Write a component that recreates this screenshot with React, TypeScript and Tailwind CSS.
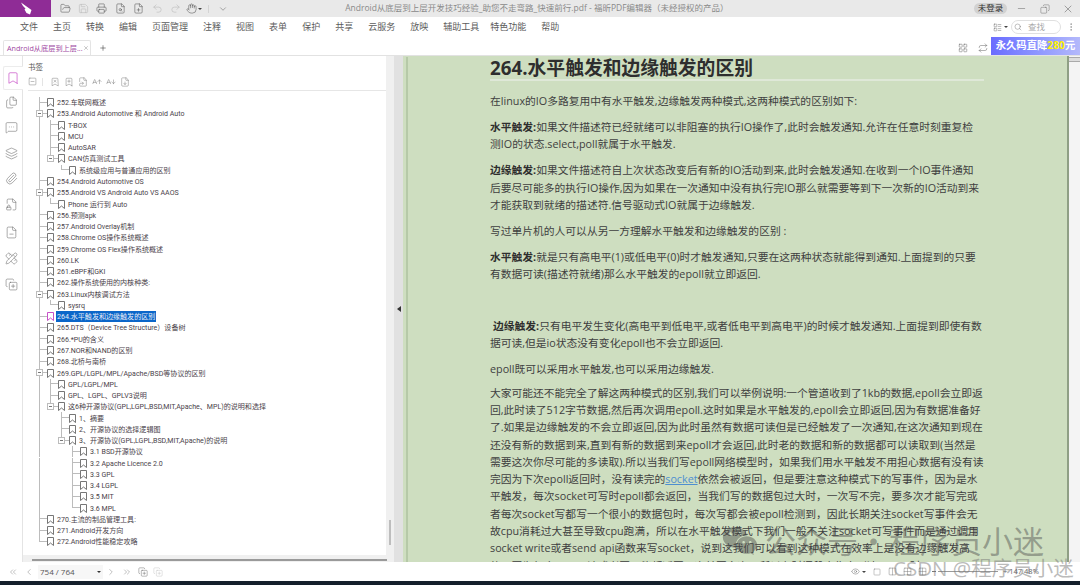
import * as React from 'react';
import {
  FolderOpen,
  Save,
  Printer,
  FileSearch,
  FilePlus,
  Undo2,
  Redo2,
  Hand,
  ChevronDown,
  Minus,
  Copy,
  X,
  Search,
  MoreVertical,
  LayoutGrid,
  Repeat,
  Files,
  MessageSquareMore,
  Layers,
  Paperclip,
  FileLock2,
  FileMinus,
  PencilRuler,
  CopyPlus,
  SquareMinus,
  BookmarkX,
  BookmarkPlus,
  FileSymlink,
  AArrowUp,
  AArrowDown,
  FileDown,
  ChevronsLeft,
  ChevronLeft,
  ChevronRight,
  ChevronsRight,
  Eye,
  Square,
  Columns2,
  Grid2x2,
  LayoutList,
  Bookmark,
  Plus,
} from 'lucide-react';
import { FaWeixin } from 'react-icons/fa';

type TreeRow = { label: string; level: number };

const treeRows: TreeRow[] = [
  { label: '252.车联网概述', level: 0 },
  { label: '253.Android Automotive 和 Android Auto', level: 0 },
  { label: 'T-BOX', level: 1 },
  { label: 'MCU', level: 1 },
  { label: 'AutoSAR', level: 1 },
  { label: 'CAN仿真测试工具', level: 1 },
  { label: '系统级应用与普通应用的区别', level: 2 },
  { label: '254.Android Automotive OS', level: 0 },
  { label: '255.Android VS Android Auto VS AAOS', level: 0 },
  { label: 'Phone 运行到 Auto', level: 1 },
  { label: '256.预测apk', level: 0 },
  { label: '257.Android Overlay机制', level: 0 },
  { label: '258.Chrome OS操作系统概述', level: 0 },
  { label: '259.Chrome OS Flex操作系统概述', level: 0 },
  { label: '260.LK', level: 0 },
  { label: '261.eBPF和GKI', level: 0 },
  { label: '262.操作系统使用的内核种类:', level: 0 },
  { label: '263.Linux内核调试方法', level: 0 },
  { label: 'sysrq', level: 1 },
  { label: '264.水平触发和边缘触发的区别', level: 0 },
  { label: '265.DTS（Device Tree Structure）设备树', level: 0 },
  { label: '266.*PU的含义', level: 0 },
  { label: '267.NOR和NAND的区别', level: 0 },
  { label: '268.北桥与南桥', level: 0 },
  { label: '269.GPL/LGPL/MPL/Apache/BSD等协议的区别', level: 0 },
  { label: 'GPL/LGPL/MPL', level: 1 },
  { label: 'GPL、LGPL、GPLV3说明', level: 1 },
  { label: '这6种开源协议(GPL,LGPL,BSD,MIT,Apache、MPL)的说明和选择', level: 1 },
  { label: '1、摘要', level: 2 },
  { label: '2、开源协议的选择逻辑图', level: 2 },
  { label: '3、开源协议(GPL,LGPL,BSD,MIT,Apache)的说明', level: 2 },
  { label: '3.1 BSD开源协议', level: 3 },
  { label: '3.2 Apache Licence 2.0', level: 3 },
  { label: '3.3 GPL', level: 3 },
  { label: '3.4 LGPL', level: 3 },
  { label: '3.5 MIT', level: 3 },
  { label: '3.6 MPL', level: 3 },
  { label: '270.主流的制品管理工具:', level: 0 },
  { label: '271.Android开发方向', level: 0 },
  { label: '272.Android性能稳定攻略', level: 0 },
];

const menuItems = [
  '文件',
  '主页',
  '转换',
  '编辑',
  '页面管理',
  '注释',
  '视图',
  '表单',
  '保护',
  '共享',
  '云服务',
  '放映',
  '辅助工具',
  '特色功能',
  '帮助',
];

const railIcons = [
  { Icon: Files, cls: 'mt-[6px]' },
  { Icon: MessageSquareMore, cls: 'mt-[12px]' },
  { Icon: Layers, cls: 'mt-[13px]' },
  { Icon: Paperclip, cls: 'mt-[12px]' },
  { Icon: FileLock2, cls: 'mt-[13px]' },
  { Icon: FileMinus, cls: 'mt-[15px]' },
  { Icon: PencilRuler, cls: 'mt-[13px]' },
  { Icon: CopyPlus, cls: 'mt-[13px]' },
];

// 같은 레벨의 다음 형제가 있는지 확인
const continuesAt = (index: number, col: number) => {
  for (let i = index + 1; i < treeRows.length; i++) {
    if (treeRows[i].level < col) return false;
    if (treeRows[i].level === col) return true;
  }
  return false;
};

function TreeItem({ row, index }: { row: TreeRow; index: number }) {
  const selected = row.label.startsWith('264.');
  const hasChildren = treeRows[index + 1]?.level > row.level;
  const cols = Array.from({ length: row.level + 1 }, (_, c) => c);

  return (
    <div className="flex h-[11.27px] items-center">
      {cols.map((c) => {
        const own = c === row.level;
        const down = continuesAt(index, c);
        return (
          <div key={c} className="relative flex h-full w-[11px] shrink-0 flex-col">
            <div
              className={`h-1/2 w-[8px] ${own || down ? 'border-l border-[#bcbcbc]' : ''} ${
                own ? 'border-b border-[#bcbcbc]' : ''
              }`}
            />
            <div className={`h-1/2 w-[8px] ${down ? 'border-l border-[#bcbcbc]' : ''}`} />
            {own && hasChildren && (
              <div className="absolute left-[-3px] top-[2px] flex h-[7px] w-[7px] items-center justify-center border border-[#bcbcbc] bg-white">
                <div className="h-px w-[3px] bg-[#777]" />
              </div>
            )}
          </div>
        );
      })}
      <svg width="7" height="9" viewBox="0 0 7 9" className="ml-[-3px] shrink-0" fill="none">
        <path
          d="M.5.5h6v8L3.5 6 .5 8.5z"
          stroke={selected ? '#c23ec2' : '#666'}
          strokeWidth="0.9"
        />
      </svg>
      <span
        className={`ml-[2px] whitespace-nowrap px-px text-[7.05px] leading-[11px] ${
          selected ? 'bg-[#0b66c9] text-[#e8eef8]' : 'text-[#4a3f4a]'
        }`}
        style={{ fontFamily: 'Roboto, "Noto Sans CJK SC", sans-serif' }}
      >
        {row.label}
      </span>
    </div>
  );
}

function TitleBar() {
  const tools = [FolderOpen, Save, Printer, FileSearch, FilePlus, Undo2, Redo2];
  const dimmed = [Save, Undo2, Redo2];
  return (
    <div className="flex h-[17px] items-center bg-[#e9e9e9]">
      <div className="flex h-full w-[51px] items-center justify-center bg-[#8f2c96]">
        <svg width="12" height="13" viewBox="0 0 12 13" fill="white">
          <path d="M1 .5 11.5 8 10 12.5 6.5 11 4.5 7.5 5.5 6.5 3 4z" />
        </svg>
      </div>
      <div className="ml-[5px] flex items-center">
        {tools.map((Icon, i) => (
          <div key={i} className="flex w-[18.4px] justify-center">
            <Icon
              size={11}
              strokeWidth={1.2}
              className={dimmed.includes(Icon) ? 'text-[#b5b5b5]' : 'text-[#555]'}
            />
          </div>
        ))}
        <div className="flex w-[18.4px] items-center justify-center">
          <Hand size={11} strokeWidth={1.2} className="text-[#555]" />
          <div className="ml-px h-0 w-0 border-x-[2px] border-t-[2px] border-x-transparent border-t-[#444]" />
        </div>
        <div className="ml-[5px] h-[8px] w-px bg-[#d4d4d4]" />
        <ChevronDown size={10} strokeWidth={1.3} className="ml-[9px] text-[#666]" />
      </div>
      <div className="ml-[117px] whitespace-nowrap text-[8.5px] text-[#8a8a8a]">
        Android从底层到上层开发技巧经验_助您不走弯路_快速前行.pdf - 福昕PDF编辑器（未经授权的产品）
      </div>
      <div className="ml-auto flex items-center">
        <div className="flex h-[11px] w-[33px] items-center justify-center rounded-full bg-[#d2d2d2] text-[8.5px] text-[#333]">
          未登录
        </div>
        <Minus size={11} strokeWidth={1} className="ml-[9px] text-[#555]" />
        <Copy size={10} strokeWidth={1} className="ml-[13px] -scale-x-100 text-[#555]" />
        <X size={12} strokeWidth={1} className="ml-[12px] mr-[6px] text-[#555]" />
      </div>
    </div>
  );
}

function MenuBar() {
  return (
    <div className="flex h-[22px] items-center bg-white pb-[2px] pl-[20px]">
      <div className="flex gap-[15px]">
        {menuItems.map((item) => (
          <span
            key={item}
            className={`whitespace-nowrap text-[9px] text-[#5c5c5c] ${
              item === '特色功能' ? 'ml-[-4px]' : ''
            }`}
          >
            {item}
          </span>
        ))}
      </div>
      <div className="ml-auto flex items-center">
        <LayoutList size={9} strokeWidth={1.2} className="text-[#666]" />
        <div className="ml-[2px] h-0 w-0 border-x-[2px] border-t-[2px] border-x-transparent border-t-[#444]" />
        <div className="ml-[3px] flex h-[14px] w-[50px] items-center rounded-full border border-[#e0e0e0] pl-[2px]">
          <Search size={8} strokeWidth={1.4} className="text-[#777]" />
          <span className="ml-[6px] text-[8.5px] text-[#aaa]">查找</span>
        </div>
        <MoreVertical size={10} strokeWidth={1.2} className="ml-[5px] mr-[4px] text-[#777]" />
      </div>
    </div>
  );
}

function TabBar() {
  return (
    <div className="flex h-[17px] items-end border-b border-[#e2e2e2] bg-white">
      <div className="ml-[3px] flex h-[15px] w-[88px] items-center rounded-t-[2px] border-x border-t border-[#e4e4e4] pl-[3px]">
        <span className="whitespace-nowrap text-[7.2px] text-[#a0479f]">Android从底层到上层...</span>
        <X size={6} strokeWidth={1.4} className="ml-auto mr-[1px] text-[#666]" />
      </div>
      <Plus size={8} strokeWidth={1.6} className="mb-[3px] ml-[8px] text-[#333]" />
      <div className="ml-auto flex items-center">
        <LayoutGrid size={10} strokeWidth={1.2} className="mt-[3px] text-[#666]" />
        <Repeat size={10} strokeWidth={1.2} className="ml-[10px] mt-[3px] text-[#666]" />
        <div className="ml-[3px] flex h-[18px] w-[89px] items-center justify-center bg-gradient-to-r from-[#6a6bff] to-[#b4b9fb] text-[10.3px] font-bold text-white">
          永久码直降<span className="text-[#fff200]">280</span>元
        </div>
      </div>
    </div>
  );
}

function LeftRail() {
  return (
    <div className="flex w-[23px] shrink-0 flex-col items-center border-r border-[#e4e4e4] bg-white pt-[10px]">
      <div className="ml-[3px] flex h-[24px] w-[20px] items-center justify-center rounded-l-[2px] border-y border-l border-[#ececec] bg-white">
        <Bookmark size={14} strokeWidth={1.1} className="text-[#c23ec2]" />
      </div>
      {railIcons.map(({ Icon, cls }, i) => (
        <Icon key={i} size={13} strokeWidth={1} className={`${cls} text-[#666]`} />
      ))}
    </div>
  );
}

function BookmarkPanel() {
  const tools = [BookmarkX, BookmarkPlus, FileSymlink, AArrowUp, AArrowDown, FileDown];
  return (
    <div className="flex w-[371px] shrink-0 flex-col bg-[#f0f0f0]">
      <div className="flex min-h-0 flex-1">
        <div className="flex w-[363px] flex-col overflow-hidden bg-white">
          <div className="pl-[5px] pt-[6px] text-[7.5px] leading-[10px] text-[#555]">书签</div>
          <div className="ml-[5px] mt-[4px] flex h-[15px] items-center border-b border-[#e6e6e6] pb-[3px]">
            <SquareMinus size={9} strokeWidth={1.1} className="text-[#666]" />
            <div className="ml-[5px] h-[8px] w-px bg-[#e4e4e4]" />
            {tools.map((Icon, i) => (
              <Icon
                key={i}
                size={10}
                strokeWidth={1}
                className={`${i === 0 ? 'ml-[7px]' : 'ml-[4px]'} text-[#666]`}
              />
            ))}
          </div>
          <div className="pl-[16px] pt-[6px]">
            {treeRows.map((row, i) => (
              <TreeItem key={row.label} row={row} index={i} />
            ))}
          </div>
        </div>
        <div className="flex flex-1 flex-col items-center justify-end pb-[10px]">
          <div className="h-[25px] w-[2px] bg-[#bdbdbd]" />
        </div>
      </div>
      <div className="flex h-[7px] items-start pl-[9px] pt-[4px]">
        <div className="h-[2px] w-[355px] bg-[#9a9a9a]" />
      </div>
    </div>
  );
}

const bold = (text: string) => <b className="font-bold text-[#2e2e2e]">{text}</b>;

function PageBody() {
  return (
    <div className="min-w-0 flex-1 overflow-hidden bg-[#cedec0] pl-[3px]">
      <div className="h-full border-l-2 border-[#b6c9a8] pl-[82px]">
        <div className="w-[494px] whitespace-nowrap text-[10.78px] leading-[17.3px] text-[#3f3f3f]">
          <h1 className="mt-[1px] h-[24px] border-b-2 border-[#dfe8d8] text-[18.8px] font-bold leading-[22px] text-[#2e2e2e]">
            264.水平触发和边缘触发的区别
          </h1>
          <p className="mt-[11px]">在linux的IO多路复用中有水平触发,边缘触发两种模式,这两种模式的区别如下:</p>
          <p className="mt-[8.7px]">
            {bold('水平触发:')}如果文件描述符已经就绪可以非阻塞的执行IO操作了,此时会触发通知.允许在任意时刻重复检
            <br />
            测IO的状态.select,poll就属于水平触发.
          </p>
          <p className="mt-[8.7px]">
            {bold('边缘触发:')}如果文件描述符自上次状态改变后有新的IO活动到来,此时会触发通知.在收到一个IO事件通知
            <br />
            后要尽可能多的执行IO操作,因为如果在一次通知中没有执行完IO那么就需要等到下一次新的IO活动到来
            <br />
            才能获取到就绪的描述符.信号驱动式IO就属于边缘触发.
          </p>
          <p className="mt-[8.7px]">写过单片机的人可以从另一方理解水平触发和边缘触发的区别 :</p>
          <p className="mt-[8.7px]">
            {bold('水平触发:')}就是只有高电平(1)或低电平(0)时才触发通知,只要在这两种状态就能得到通知.上面提到的只要
            <br />
            有数据可读(描述符就绪)那么水平触发的epoll就立即返回.
          </p>
          <p className="mt-[34.7px] pl-[3px]">
            {bold('边缘触发:')}只有电平发生变化(高电平到低电平,或者低电平到高电平)的时候才触发通知.上面提到即使有数
          </p>
          <p>据可读,但是io状态没有变化epoll也不会立即返回.</p>
          <p className="mt-[8.7px]">epoll既可以采用水平触发,也可以采用边缘触发.</p>
          <p className="mt-[6px]">
            大家可能还不能完全了解这两种模式的区别,我们可以举例说明:一个管道收到了1kb的数据,epoll会立即返
            <br />
            回,此时读了512字节数据,然后再次调用epoll.这时如果是水平触发的,epoll会立即返回,因为有数据准备好
            <br />
            了.如果是边缘触发的不会立即返回,因为此时虽然有数据可读但是已经触发了一次通知,在这次通知到现在
            <br />
            还没有新的数据到来,直到有新的数据到来epoll才会返回,此时老的数据和新的数据都可以读取到(当然是
            <br />
            需要这次你尽可能的多读取).所以当我们写epoll网络模型时，如果我们用水平触发不用担心数据有没有读
            <br />
            完因为下次epoll返回时，没有读完的<span className="text-[#4f8fd0] underline">socket</span>
            依然会被返回，但是要注意这种模式下的写事件，因为是水
            <br />
            平触发，每次socket可写时epoll都会返回，当我们写的数据包过大时，一次写不完，要多次才能写完或
            <br />
            者每次socket写都写一个很小的数据包时，每次写都会被epoll检测到，因此长期关注socket写事件会无
            <br />
            故cpu消耗过大甚至导致cpu跑满，所以在水平触发模式下我们一般不关注socket可写事件而是通过调用
            <br />
            socket write或者send api函数来写socket，说到这我们可以看到这种模式在效率上是没有边缘触发高
            <br />
            的，因为每个socket读或者写可能都返回两次甚至多次，所以在时间段内集中到达socket时
          </p>
        </div>
      </div>
    </div>
  );
}

function StatusBar() {
  return (
    <div className="flex h-[19px] items-center bg-white">
      <ChevronsLeft size={10} strokeWidth={1.1} className="ml-[8px] text-[#777]" />
      <ChevronLeft size={10} strokeWidth={1.1} className="ml-[6px] text-[#777]" />
      <div className="ml-[4px] flex h-[14px] w-[65px] items-center bg-[#f7f7f7] pl-[2px] text-[8px] text-[#555]">
        754 / 764
        <div className="ml-auto mr-[2px] h-0 w-0 border-x-[2px] border-t-[2px] border-x-transparent border-t-[#333]" />
      </div>
      <ChevronRight size={10} strokeWidth={1.1} className="ml-[3px] text-[#777]" />
      <ChevronsRight size={10} strokeWidth={1.1} className="ml-[6px] text-[#777]" />
      <CopyPlus size={10} strokeWidth={1.1} className="ml-[6px] text-[#666]" />
      <CopyPlus size={10} strokeWidth={1.1} className="ml-[5px] text-[#c2c2c2]" />
      <div className="ml-[688px] flex items-center">
        <Eye size={9} strokeWidth={1.2} className="text-[#666]" />
        <div className="ml-[2px] h-0 w-0 border-x-[2px] border-t-[2px] border-x-transparent border-t-[#444]" />
        <Square size={8} strokeWidth={1.1} className="ml-[7px] text-[#666]" />
        <Columns2 size={9} strokeWidth={1.1} className="ml-[7px] text-[#666]" />
        <Grid2x2 size={9} strokeWidth={1.1} className="ml-[6px] text-[#666]" />
        <Grid2x2 size={9} strokeWidth={1.1} className="ml-[6px] text-[#666]" />
        <div className="ml-[5px] h-px w-[4px] bg-[#777]" />
        <div className="ml-[2px] h-px w-[60px] bg-[#9a9a9a]" />
        <div className="ml-[5px] text-[7.5px] text-[#666]">+ 147.48%</div>
      </div>
    </div>
  );
}

export default function App() {
  return (
    <div
      className="relative h-[585px] w-[1080px] overflow-hidden bg-white"
      style={{ fontFamily: '"Open Sans", "Noto Sans CJK SC", sans-serif' }}
    >
      <TitleBar />
      <MenuBar />
      <TabBar />
      <div className="flex h-[506px]">
        <LeftRail />
        <BookmarkPanel />
        <div className="flex w-[9px] shrink-0 items-center justify-center bg-[#e1e1e1]">
          <div className="h-0 w-0 border-y-[3px] border-r-[4px] border-y-transparent border-r-[#333]" />
        </div>
        <PageBody />
        <div className="flex w-[13px] shrink-0 flex-col border-l-2 border-[#8f9f85] bg-[#f4f4f4]">
          <div className="mt-[1px] h-[5px] border-y border-[#aaa] bg-[#ddd]" />
        </div>
      </div>
      <StatusBar />
      <div className="h-[4px] bg-[#15202b]" />

      {/* 워터마크 */}
      <div className="pointer-events-none absolute left-[722px] top-[521px] flex items-center whitespace-nowrap text-[31px] leading-[40px] text-[#4a4a4a]/45">
        <FaWeixin size={36} className="mr-[7px]" />
        公众号・程序员小迷
      </div>
      <div className="pointer-events-none absolute left-[893px] top-[556px] whitespace-nowrap text-[20.5px] leading-[24px] text-[#777]/50">
        CSDN @程序员小迷
      </div>
    </div>
  );
}
